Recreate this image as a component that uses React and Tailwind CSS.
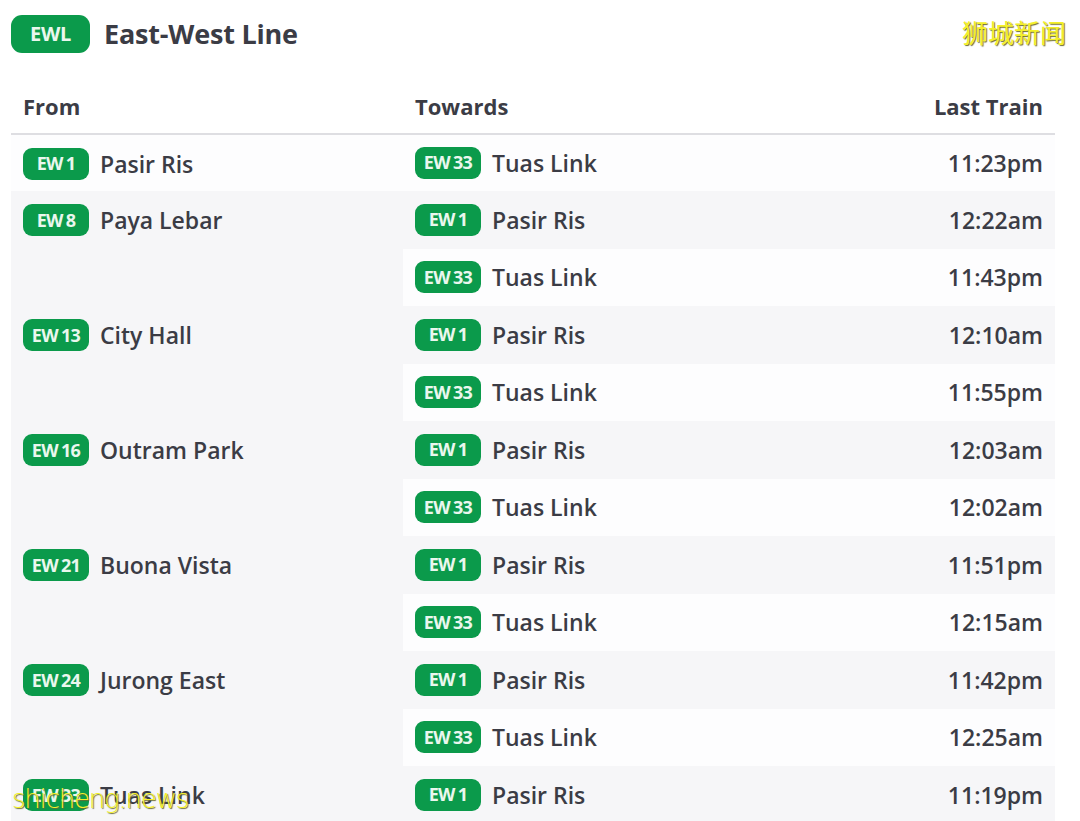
import React from "react";

const groups = [
  { code: "EW 1", name: "Pasir Ris", rows: [["EW 33", "Tuas Link", "11:23pm"]] },
  { code: "EW 8", name: "Paya Lebar", rows: [["EW 1", "Pasir Ris", "12:22am"], ["EW 33", "Tuas Link", "11:43pm"]] },
  { code: "EW 13", name: "City Hall", rows: [["EW 1", "Pasir Ris", "12:10am"], ["EW 33", "Tuas Link", "11:55pm"]] },
  { code: "EW 16", name: "Outram Park", rows: [["EW 1", "Pasir Ris", "12:03am"], ["EW 33", "Tuas Link", "12:02am"]] },
  { code: "EW 21", name: "Buona Vista", rows: [["EW 1", "Pasir Ris", "11:51pm"], ["EW 33", "Tuas Link", "12:15am"]] },
  { code: "EW 24", name: "Jurong East", rows: [["EW 1", "Pasir Ris", "11:42pm"], ["EW 33", "Tuas Link", "12:25am"]] },
  { code: "EW 33", name: "Tuas Link", rows: [["EW 1", "Pasir Ris", "11:19pm"]] },
];

function Badge({ code }) {
  const [a, b] = code.split(" ");
  return (
    <span className="inline-flex items-center justify-center w-[66px] h-[32px] rounded-[9px] bg-[#0b9a4b] text-[#eaf7ee] text-[18px] font-bold tracking-[-0.7px] shrink-0">
      {a}
      <span className="ml-[3px]">{b}</span>
    </span>
  );
}

function Station({ code, name }) {
  return (
    <div className="flex items-center gap-[11px]">
      <Badge code={code} />
      <span className="text-[23px] font-semibold text-[#3b3c45]">{name}</span>
    </div>
  );
}

export default function App() {
  let idx = 0;
  const trs = [];
  groups.forEach((g, gi) => {
    g.rows.forEach((r, ri) => {
      idx += 1;
      const gray = idx % 2 === 0;
      trs.push(
        <tr key={`${gi}-${ri}`} className={gray ? "bg-[#f6f6f8]" : "bg-[#fdfdfe]"}>
          {ri === 0 && (
            <td rowSpan={g.rows.length} className="align-top px-3 pt-[12px] w-[392px]">
              <Station code={g.code} name={g.name} />
            </td>
          )}
          <td className="px-3 h-[57.5px] align-middle">
            <Station code={r[0]} name={r[1]} />
          </td>
          <td className="px-3 h-[57.5px] align-middle text-right text-[23px] font-semibold text-[#3b3c45]">
            {r[2]}
          </td>
        </tr>
      );
    });
  });

  return (
    <div className="relative w-[1080px] h-[821px] overflow-hidden bg-white font-['Open_Sans',sans-serif]">
      <div className="flex items-center gap-[14px] pl-[11px] pt-[14px]">
        <span className="inline-flex items-center justify-center w-[79px] h-[38px] rounded-[11px] bg-[#0b9a4b] text-[#eaf7ee] text-[20px] font-bold tracking-[-0.3px]">
          EWL
        </span>
        <span className="text-[27px] font-bold text-[#3b3c45] tracking-[-0.2px]">East-West Line</span>
      </div>
      <table className="ml-[11px] mt-[25px] w-[1044px] border-collapse">
        <thead>
          <tr>
            <th className="text-left px-3 h-[54px] text-[22px] font-bold text-[#3b3c45] border-b-2 border-[#dedee2]">From</th>
            <th className="text-left px-3 text-[22px] font-bold text-[#3b3c45] border-b-2 border-[#dedee2]">Towards</th>
            <th className="text-right px-3 text-[22px] font-bold text-[#3b3c45] border-b-2 border-[#dedee2]">Last Train</th>
          </tr>
        </thead>
        <tbody>{trs}</tbody>
      </table>
      <div className="absolute right-[14px] top-[12px] text-[26px] text-[#f4f02a] font-['Noto_Sans_CJK_SC',sans-serif] [text-shadow:1px_1px_1px_#6b6b30]">
        狮城新闻
      </div>
      <div className="absolute left-[12px] top-[780px] text-[26px] text-[#f4f02a] font-['DejaVu_Sans',sans-serif] font-light tracking-[-1.2px] [text-shadow:1px_1px_1px_#6b6b30]">
        shicheng.news
      </div>
    </div>
  );
}
